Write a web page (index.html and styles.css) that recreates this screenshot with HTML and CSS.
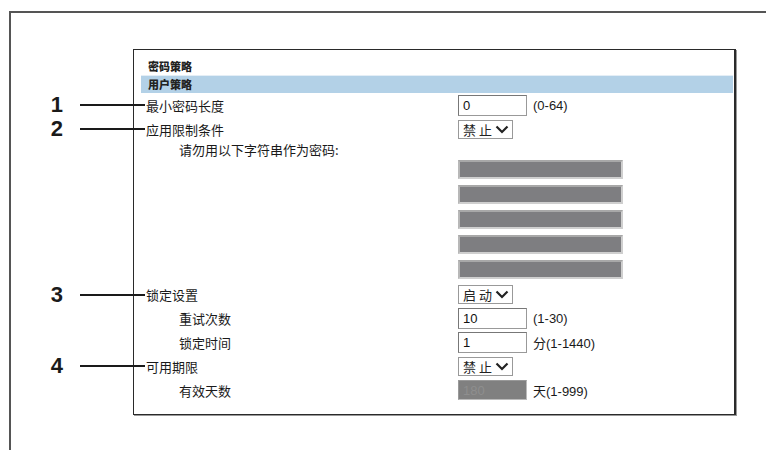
FILE: index.html
```html
<!DOCTYPE html>
<html>
<head>
  <meta charset="utf-8">
  <link rel="stylesheet" href="styles.css">
  <title>密码策略</title>
</head>
<body>
  <div class="frame">
    <div class="panel">
      <div class="title">密码策略</div>
      <div class="band">用户策略</div>
      <div class="rows">
        <div class="row">
          <div class="label"><span class="callout"><b>1</b><i></i></span>最小密码长度</div>
          <div class="ctl"><input class="field" type="text" value="0"><span class="hint">(0-64)</span></div>
        </div>
        <div class="row">
          <div class="label"><span class="callout"><b>2</b><i></i></span>应用限制条件</div>
          <div class="ctl"><div class="select"><span>禁止</span><svg width="14" height="9" viewBox="0 0 14 9"><path d="M1.5 1.5 L7 7 L12.5 1.5" fill="none" stroke="#222" stroke-width="2.2"/></svg></div></div>
        </div>
        <div class="row short">
          <div class="label sub">请勿用以下字符串作为密码:</div>
        </div>
        <div class="row bar"><div class="label"></div><div class="ctl"><input class="wide" type="text" disabled></div></div>
        <div class="row bar"><div class="label"></div><div class="ctl"><input class="wide" type="text" disabled></div></div>
        <div class="row bar"><div class="label"></div><div class="ctl"><input class="wide" type="text" disabled></div></div>
        <div class="row bar"><div class="label"></div><div class="ctl"><input class="wide" type="text" disabled></div></div>
        <div class="row bar"><div class="label"></div><div class="ctl"><input class="wide" type="text" disabled></div></div>
        <div class="row first">
          <div class="label"><span class="callout"><b>3</b><i></i></span>锁定设置</div>
          <div class="ctl"><div class="select"><span>启动</span><svg width="14" height="9" viewBox="0 0 14 9"><path d="M1.5 1.5 L7 7 L12.5 1.5" fill="none" stroke="#222" stroke-width="2.2"/></svg></div></div>
        </div>
        <div class="row">
          <div class="label sub">重试次数</div>
          <div class="ctl"><input class="field" type="text" value="10"><span class="hint">(1-30)</span></div>
        </div>
        <div class="row">
          <div class="label sub">锁定时间</div>
          <div class="ctl"><input class="field" type="text" value="1"><span class="hint">分(1-1440)</span></div>
        </div>
        <div class="row">
          <div class="label"><span class="callout"><b>4</b><i></i></span>可用期限</div>
          <div class="ctl"><div class="select"><span>禁止</span><svg width="14" height="9" viewBox="0 0 14 9"><path d="M1.5 1.5 L7 7 L12.5 1.5" fill="none" stroke="#222" stroke-width="2.2"/></svg></div></div>
        </div>
        <div class="row">
          <div class="label sub">有效天数</div>
          <div class="ctl"><input class="field off" type="text" value="180" disabled><span class="hint">天(1-999)</span></div>
        </div>
      </div>
    </div>
  </div>
</body>
</html>
```
FILE: styles.css
```css
body {
  margin: 0;
  overflow: hidden;
  background: #fff;
  color: #222;
  font-family: "Liberation Sans", "Noto Sans CJK SC", sans-serif;
}
.frame {
  box-sizing: border-box;
  margin: 11px 0 0 9px;
  border-top: 2px solid #555;
  border-left: 2px solid #555;
  height: 439px;
  padding: 36px 0 0 122px;
}
.panel {
  box-sizing: border-box;
  width: 603px;
  height: 366px;
  border: 1px solid #2a2a2a;
  border-right-width: 2px;
  box-shadow: 1px 1px 0 #999;
}
.title {
  height: 25px;
  box-sizing: border-box;
  padding: 8px 0 0 14px;
  font-size: 11px;
  line-height: 16px;
  font-weight: 900;
  font-family: "Noto Sans CJK SC", sans-serif;
}
.band {
  height: 18px;
  margin: 0 1px 0 7px;
  padding-left: 7px;
  background: #b3d1e7;
  border-top: 1px solid #e4eef6;
  box-sizing: border-box;
  font-size: 11px;
  line-height: 17px;
  font-weight: 900;
  font-family: "Noto Sans CJK SC", sans-serif;
}
.rows {
  padding-left: 12px;
}
.row {
  display: flex;
  align-items: center;
  height: 24px;
}
.row.short { height: 17px; }
.row.bar { height: 25px; align-items: flex-start; }
.row.first { height: 23px; }
.label {
  position: relative;
  width: 312px;
  flex: none;
  font-size: 13px;
  font-family: "Noto Sans CJK SC", sans-serif;
  color: #1a1a1a;
}
.label.sub { padding-left: 33px; box-sizing: border-box; }
.callout {
  position: absolute;
  right: calc(100% + 1px);
  top: 50%;
  transform: translateY(-50%);
  display: flex;
  align-items: center;
  gap: 17px;
}
.callout b {
  font-family: "Liberation Sans", sans-serif;
  font-size: 22px;
  line-height: 22px;
  color: #1a1a1a;
}
.callout i {
  display: block;
  width: 65px;
  height: 2px;
  background: #1a1a1a;
}
.ctl {
  display: flex;
  align-items: center;
  gap: 6px;
}
.field {
  box-sizing: border-box;
  width: 69px;
  height: 21px;
  margin: 0;
  padding: 0 4px;
  border: 1px solid #999;
  border-top-color: #777;
  border-left-color: #777;
  font-family: "Liberation Sans", sans-serif;
  font-size: 13px;
  color: #111;
  background: #fff;
}
.field.off {
  height: 20px;
  background: #808080;
  color: #8e8e8e;
  border: 1px solid #bbb;
  border-top-color: #999;
  border-left-color: #999;
}
.wide {
  box-sizing: border-box;
  width: 165px;
  height: 19px;
  margin: 2px 0 0;
  background: #7e7e81;
  border: 2px solid #cfcfcf;
  border-top-color: #a8a8a8;
  border-left-color: #b8b8b8;
}
.hint {
  font-size: 13px;
  font-family: "Liberation Sans", "Noto Sans CJK SC", sans-serif;
  color: #1a1a1a;
}
.select {
  box-sizing: border-box;
  width: 55px;
  height: 19px;
  display: flex;
  align-items: center;
  justify-content: space-between;
  padding: 0 3px 0 4px;
  border: 1px solid #999;
  background: #fff;
  font-size: 13px;
  font-family: "Noto Sans CJK SC", sans-serif;
  letter-spacing: 3px;
  color: #222;
}
```
